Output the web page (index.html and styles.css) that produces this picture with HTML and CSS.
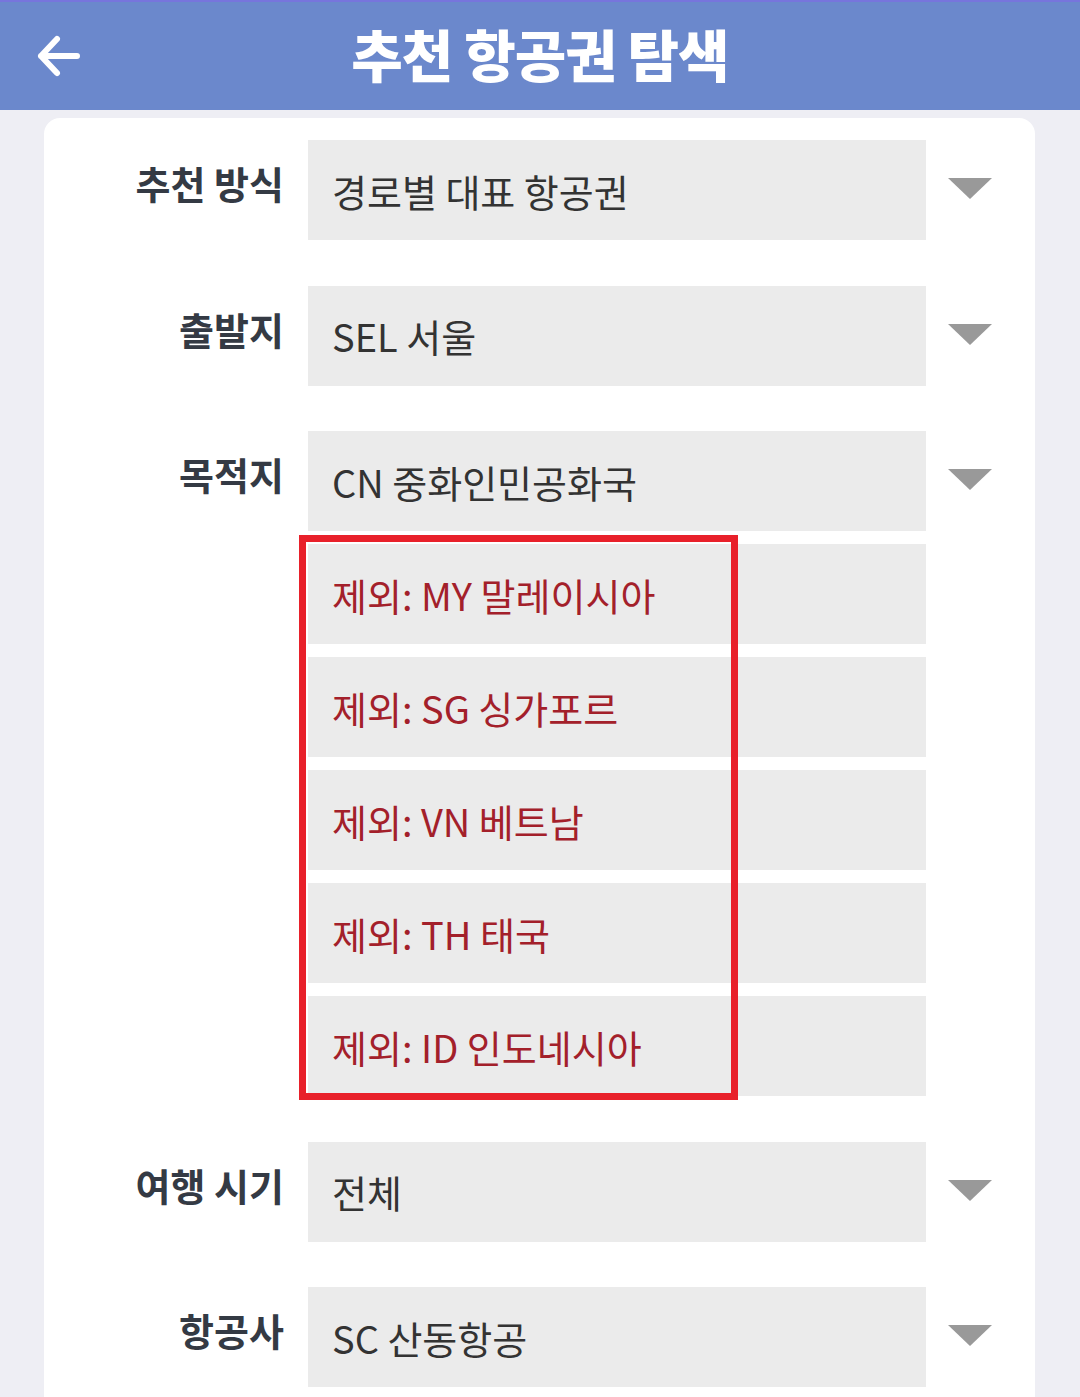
FILE: index.html
```html
<!DOCTYPE html>
<html>
 <head>
	<title>추천 항공권 탐색</title>
	<meta charset="UTF-8"/>
	<meta name="viewport" content="width=device-width, initial-scale=1.0">
	<link rel="stylesheet" href="styles.css">
 </head>
 <body>
	<header class="topbar">
		<a class="back" href="#">
			<svg width="48" height="48" viewBox="0 0 48 48"><path d="M43 24H7M23 7L7 24L23 41" fill="none" stroke="#fff" stroke-width="6" stroke-linecap="round" stroke-linejoin="round"/></svg>
		</a>
		<h1>추천 항공권 탐색</h1>
		<span></span>
	</header>

	<div class="card">
		<div class="row">
			<div class="label">추천 방식</div>
			<div class="field">경로별 대표 항공권</div>
			<div class="caret"></div>
		</div>

		<div class="row">
			<div class="label">출발지</div>
			<div class="field">SEL 서울</div>
			<div class="caret"></div>
		</div>

		<div class="row">
			<div class="label">목적지</div>
			<div class="stack">
				<div class="field">CN 중화인민공화국</div>
				<div class="excl">
					<div class="field red">제외: MY 말레이시아</div>
					<div class="field red">제외: SG 싱가포르</div>
					<div class="field red">제외: VN 베트남</div>
					<div class="field red">제외: TH 태국</div>
					<div class="field red">제외: ID 인도네시아</div>
					<div class="mark"></div>
				</div>
			</div>
			<div class="caret"></div>
		</div>

		<div class="row">
			<div class="label">여행 시기</div>
			<div class="field">전체</div>
			<div class="caret"></div>
		</div>

		<div class="row">
			<div class="label">항공사</div>
			<div class="field">SC 산동항공</div>
			<div class="caret"></div>
		</div>
	</div>
 </body>
</html>
```

FILE: styles.css
```css
body{
  margin: 0;
  font-family: "Noto Sans CJK KR", "Noto Sans", sans-serif;
  background: #eeeef4;
}
.topbar{
  height: 108px;
  border-top: 2px solid #7775dc;
  background: #6b88cc;
  display: grid;
  grid-template-columns: 1fr auto 1fr;
  align-items: center;
}
.back{
  padding-left: 34px;
  display: flex;
}
.topbar h1{
  margin: 0;
  color: white;
  font-size: 56px;
  font-weight: 900;
  letter-spacing: -1px;
  line-height: 1;
  padding-bottom: 6px;
}
.card{
  margin: 8px 45px 0 44px;
  background: white;
  border-radius: 16px;
  padding: 22px 0 30px;
}
.row{
  display: grid;
  grid-template-columns: 240px 618px 1fr;
  column-gap: 24px;
  margin-bottom: 45.5px;
}
.label{
  text-align: right;
  color: #343a44;
  font-size: 38px;
  font-weight: bold;
  letter-spacing: 0;
  line-height: 1;
  padding-top: 24px;
}
.field{
  height: 100px;
  box-sizing: border-box;
  background: #ebebeb;
  color: #333;
  font-size: 38px;
  padding: 0 24px;
  display: flex;
  align-items: center;
}
.stack .excl{
  position: relative;
  margin-top: 13px;
  display: grid;
  row-gap: 13px;
}
.field.red{
  color: #a3202a;
}
.mark{
  position: absolute;
  left: -9px;
  top: -9px;
  width: 439px;
  bottom: -4px;
  box-sizing: border-box;
  border: 7px solid #e8202a;
}
.caret{
  margin: 38px 0 0 -2px;
  width: 0;
  height: 0;
  border-left: 22px solid transparent;
  border-right: 22px solid transparent;
  border-top: 21px solid #999;
}
```
